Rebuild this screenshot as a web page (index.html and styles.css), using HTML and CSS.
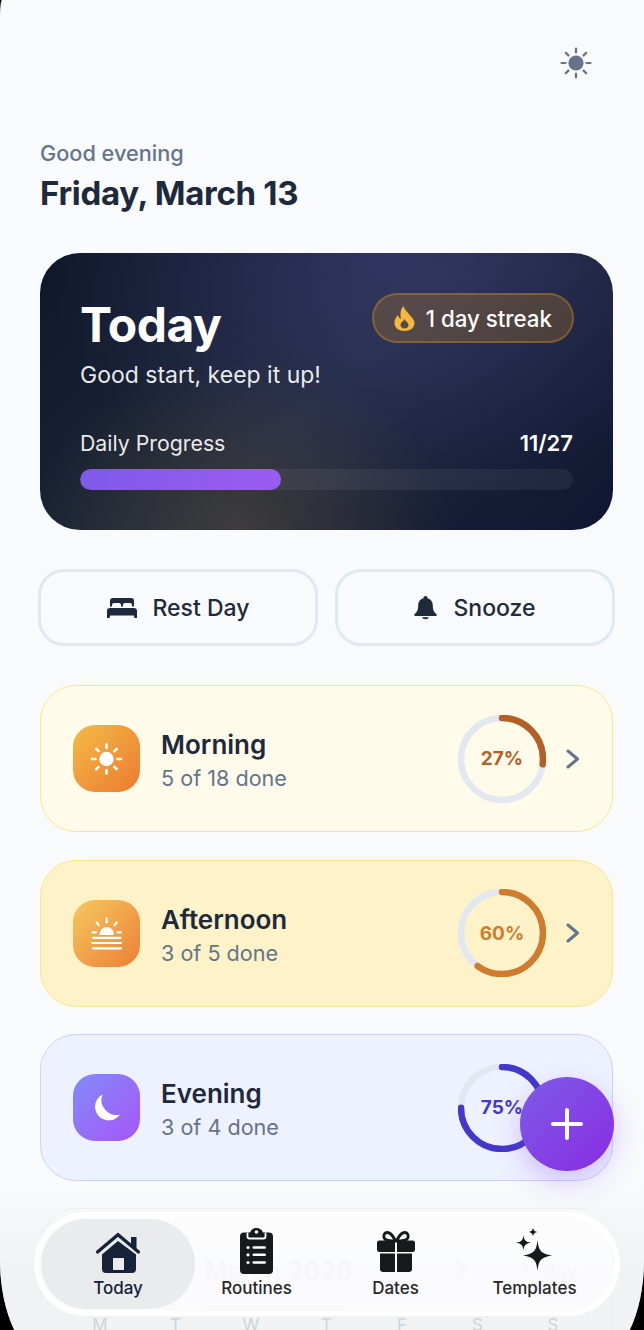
FILE: index.html
```html
<!DOCTYPE html>
<html lang="en">
<head>
    <meta charset="UTF-8">
    <meta name="viewport" content="width=device-width, initial-scale=1.0">
    <title>Today</title>
    <link rel="stylesheet" href="styles.css">
</head>
<body>
<div class="screen">
    <div class="topbar">
        <svg class="theme-icon" viewBox="0 0 32 32" width="32" height="32">
            <circle cx="16" cy="16" r="7.6" fill="#64748b"/>
            <g stroke="#64748b" stroke-width="2.2" stroke-linecap="round">
                <path d="M16 1.5v4M16 26.5v4M1.5 16h4M26.5 16h4M5.8 5.8l2.6 2.6M23.6 23.6l2.6 2.6M5.8 26.2l2.6-2.6M23.6 8.4l2.6-2.6"/>
            </g>
        </svg>
    </div>

    <p class="greeting">Good evening</p>
    <h1 class="date">Friday, March 13</h1>

    <section class="hero">
        <div class="hero-top">
            <div>
                <h2 class="hero-title">Today</h2>
                <p class="hero-sub">Good start, keep it up!</p>
            </div>
            <div class="streak">
                <svg viewBox="0 0 20 25" width="21" height="25">
                    <path fill="#f5b83d" fill-rule="evenodd" d="M9 0C10 4 13 6 16 10C19 13 20 15 20 17C20 22 15.5 25 10 25C4.5 25 0 22 0 17C0 13 2 10.500 3.500 9C4 11 5 12.500 6.500 13C5.500 8 6 3 9 0ZM10 13C11 15.500 14 16.500 14 19C14 21 12.200 22.500 10 22.500C7.800 22.500 6 21 6 19C6 16.500 9 15.500 10 13Z"/>
                </svg>
                <span>1 day streak</span>
            </div>
        </div>
        <div class="progress-head">
            <span>Daily Progress</span>
            <span class="progress-count">11/27</span>
        </div>
        <div class="progress-track">
            <div class="progress-fill" style="width: 40.7%"></div>
        </div>
    </section>

    <div class="actions">
        <button class="action">
            <svg viewBox="0 0 30 20" width="30" height="20">
                <path fill="#1e293b" fill-rule="evenodd" d="M6 0H24A3 3 0 0 1 27 3V8.500H25V7A2 2 0 0 0 23 5H18A2 2 0 0 0 16 7V8.500H14V7A2 2 0 0 0 12 5H7A2 2 0 0 0 5 7V8.500H3V3A3 3 0 0 1 6 0Z"/>
                <path fill="#1e293b" d="M3 10H27A3 3 0 0 1 30 13V20H27.500L26.800 17.500H3.200L2.500 20H0V13A3 3 0 0 1 3 10Z"/>
            </svg>
            <span>Rest Day</span>
        </button>
        <button class="action">
            <svg viewBox="0 0 23 24" width="23" height="24">
                <path fill="#1e293b" d="M11.500 0A2 2 0 0 1 13.500 2.200C17 3 18.800 6 18.800 9.500C18.800 14 20 16 22.300 18C23.200 18.900 22.700 20 21.500 20H1.500C0.300 20 -0.200 18.900 0.700 18C3 16 4.200 14 4.200 9.500C4.200 6 6 3 9.500 2.200A2 2 0 0 1 11.500 0Z"/>
                <path fill="#1e293b" d="M8 21.200H15A3.600 2.800 0 0 1 8 21.200Z"/>
            </svg>
            <span>Snooze</span>
        </button>
    </div>

    <a class="routine morning">
        <div class="routine-icon icon-warm">
            <svg viewBox="0 0 67 67" width="67" height="67">
                <circle cx="33.500" cy="34" r="7.200" fill="#fff"/>
                <path stroke="#fff" stroke-width="2.600" stroke-linecap="round" d="M33.500 19.500v3.500M33.500 45v3.500M19 34h3.500M44.500 34h3.500M23.300 23.800l2.300 2.300M41.400 41.900l2.300 2.300M23.300 44.200l2.300-2.300M41.400 26.100l2.300-2.300"/>
            </svg>
        </div>
        <div class="routine-text">
            <h3>Morning</h3>
            <p>5 of 18 done</p>
        </div>
        <div class="ring">
            <svg viewBox="0 0 88 88" width="88" height="88">
                <circle class="ring-track" cx="44" cy="44" r="41"/>
                <circle class="ring-value" cx="44" cy="44" r="41" stroke="#b45f26" stroke-dasharray="69.600 258"/>
            </svg>
            <span style="color: #b45f26">27%</span>
        </div>
        <svg class="chevron" viewBox="0 0 14 20" width="14" height="20"><path d="M2 2l9.500 8L2 18"/></svg>
    </a>

    <a class="routine afternoon">
        <div class="routine-icon icon-warm">
            <svg viewBox="0 0 67 67" width="67" height="67">
                <path fill="#fff" d="M26.500 35A7.200 8 0 0 1 41 35Z"/>
                <path stroke="#fff" stroke-width="2.200" stroke-linecap="round" d="M33.700 18.500v4M23.600 22.500l2.200 2.600M43.800 22.500l-2.200 2.600M19.500 32.300h3.500M44.300 32.300h3.500M20 37.800h27.500M19 43h29M20 48.300h28"/>
            </svg>
        </div>
        <div class="routine-text">
            <h3>Afternoon</h3>
            <p>3 of 5 done</p>
        </div>
        <div class="ring">
            <svg viewBox="0 0 88 88" width="88" height="88">
                <circle class="ring-track" cx="44" cy="44" r="41"/>
                <circle class="ring-value" cx="44" cy="44" r="41" stroke="#cf7d2c" stroke-dasharray="154.600 258"/>
            </svg>
            <span style="color: #cf7d2c">60%</span>
        </div>
        <svg class="chevron" viewBox="0 0 14 20" width="14" height="20"><path d="M2 2l9.500 8L2 18"/></svg>
    </a>

    <a class="routine evening">
        <div class="routine-icon icon-cool">
            <svg viewBox="0 0 67 67" width="67" height="67">
                <path fill="#fff" d="M29.500 20.500A13.700 13.700 0 1 0 47 40.500A15 15 0 0 1 29.500 20.500Z"/>
            </svg>
        </div>
        <div class="routine-text">
            <h3>Evening</h3>
            <p>3 of 4 done</p>
        </div>
        <div class="ring">
            <svg viewBox="0 0 88 88" width="88" height="88">
                <circle class="ring-track" cx="44" cy="44" r="41"/>
                <circle class="ring-value" cx="44" cy="44" r="41" stroke="#4338ca" stroke-dasharray="193.200 258"/>
            </svg>
            <span style="color: #4338ca">75%</span>
        </div>
        <svg class="chevron" viewBox="0 0 14 20" width="14" height="20"><path d="M2 2l9.500 8L2 18"/></svg>
    </a>

    <section class="calendar">
        <div class="calendar-head">
            <span class="calendar-month">March 2026</span>
            <svg class="calendar-next" viewBox="0 0 14 24" width="14" height="24"><path d="M2 2l9 10-9 10"/></svg>
            <span class="calendar-today">Today</span>
        </div>
        <div class="calendar-sub"></div>
        <div class="weekdays">
            <span>M</span><span>T</span><span>W</span><span>T</span><span>F</span><span>S</span><span>S</span>
        </div>
    </section>

    <div class="bottom-fade"></div>

    <button class="fab">
        <svg viewBox="0 0 32 32" width="32" height="32"><path d="M16 2v28M2 16h28"/></svg>
    </button>

    <nav class="tabbar">
        <a class="tab tab-active">
            <svg viewBox="0 0 46 42" width="46" height="42">
                <path fill="#16213a" d="M36 5h5.500v12H36z"/>
                <path fill="#e9ebec" d="M23 2L0 21l2 3L23 7l21 17 2-3z"/>
                <path fill="none" stroke="#16213a" stroke-width="3.200" stroke-linecap="round" stroke-linejoin="miter" d="M2.500 20L23 2.700 43.500 20"/>
                <path fill="#16213a" fill-rule="evenodd" d="M23 9L7 22.500V37a4 4 0 0 0 4 4H37a4 4 0 0 0 4-4V22.500ZM18 26h11v12H18Z"/>
            </svg>
            <span>Today</span>
        </a>
        <a class="tab">
            <svg viewBox="0 0 33 46" width="33" height="46">
                <path fill="#18191b" d="M4 4.600H10C11 1.500 13.500 0 16.500 0C19.500 0 22 1.500 23 4.600H29A4 4 0 0 1 33 8.600V42A4 4 0 0 1 29 46H4A4 4 0 0 1 0 42V8.600A4 4 0 0 1 4 4.600Z"/>
                <circle cx="16.500" cy="4" r="1.800" fill="#fcfcfd"/>
                <path fill="none" stroke="#fcfcfd" stroke-width="1.800" stroke-linecap="round" d="M7.500 5.500V8.500A2 2 0 0 0 9.500 10.500H23.500A2 2 0 0 0 25.500 8.500V5.500"/>
                <g fill="#fcfcfd">
                    <circle cx="8" cy="19.500" r="1.600"/><circle cx="8" cy="26.800" r="1.600"/><circle cx="8" cy="34.500" r="1.600"/>
                    <rect x="12.500" y="18.300" width="13.500" height="2.400" rx="1.200"/>
                    <rect x="12.500" y="25.600" width="13.500" height="2.400" rx="1.200"/>
                    <rect x="12.500" y="33.300" width="13.500" height="2.400" rx="1.200"/>
                </g>
            </svg>
            <span>Routines</span>
        </a>
        <a class="tab">
            <svg viewBox="0 0 38 43" width="38" height="43">
                <path fill="none" stroke="#18191b" stroke-width="2.800" d="M18.500 10C16 5 14 1.500 10.500 1.500C7 1.500 6 5 7.500 7.500C9 10 14 10 18.500 10ZM19.500 10C22 5 24 1.500 27.500 1.500C31 1.500 32 5 30.500 7.500C29 10 24 10 19.500 10Z"/>
                <path fill="#18191b" d="M2.500 9.500H18V21H2.500A2.500 2.500 0 0 1 0 18.500V12A2.500 2.500 0 0 1 2.500 9.500ZM20 9.500H35.500A2.500 2.500 0 0 1 38 12V18.500A2.500 2.500 0 0 1 35.500 21H20ZM3 22.500H18V41H6A3 3 0 0 1 3 38ZM20 22.500H35V38A3 3 0 0 1 32 41H20Z"/>
            </svg>
            <span>Dates</span>
        </a>
        <a class="tab">
            <svg viewBox="0 0 38 46" width="38" height="46">
                <g fill="#18191b" transform="translate(-1.500 -1)">
                    <path d="M23 13C24 23 26 27 37.500 28.500C26 30 24 34 23 44C22 34 20 30 8.500 28.500C20 27 22 23 23 13Z"/>
                    <path d="M9 8C9.500 13 11 15 16.500 15.700C11 16.400 9.500 18.500 9 23.500C8.500 18.500 7 16.400 1.500 15.700C7 15 8.500 13 9 8Z"/>
                    <path d="M18.500 0.500C18.800 3.300 19.800 4.500 23 5C19.800 5.500 18.800 6.700 18.500 9.500C18.200 6.700 17.200 5.500 14 5C17.200 4.500 18.200 3.300 18.500 0.500Z"/>
                </g>
            </svg>
            <span>Templates</span>
        </a>
    </nav>
</div>
</body>
</html>
```

FILE: styles.css
```css
* {
    box-sizing: border-box;
}
body {
    margin: 0;
    background: #000;
    height: 1330px;
    overflow: hidden;
    font-family: Inter, "Noto Sans", sans-serif;
}
.screen {
    position: relative;
    width: 644px;
    height: 1360px;
    padding: 47px 31px 0 40px;
    background: #f8fafc;
    border-radius: 2px 0 50px 50px / 16px 0 100px 100px;
    overflow: hidden;
}

.topbar {
    display: flex;
    justify-content: flex-end;
    height: 32px;
    padding-right: 21px;
}

.greeting {
    margin: 59px 0 0;
    font-size: 21.7px;
    line-height: 30px;
    font-weight: 500;
    color: #64748b;
}
.date {
    margin: 5px 0 0;
    font-size: 33px;
    line-height: 40px;
    font-weight: 700;
    letter-spacing: -0.3px;
    color: #1e293b;
}

.hero {
    height: 277px;
    margin-top: 40px;
    padding: 40px;
    border-radius: 40px;
    color: #fff;
    background:
        radial-gradient(ellipse 340px 250px at 61% 3%, rgba(99, 88, 190, 0.3), rgba(99, 88, 190, 0) 100%),
        radial-gradient(ellipse 210px 170px at 35% 100%, rgba(250, 175, 70, 0.15), rgba(250, 175, 70, 0) 100%),
        linear-gradient(135deg, #0f172a, #1e293b 50%, #101632);
}
.hero-top {
    display: flex;
    justify-content: space-between;
    align-items: flex-start;
}
.hero-title {
    margin: 3px 0 0;
    font-size: 48px;
    line-height: 58px;
    font-weight: 700;
    letter-spacing: -0.5px;
}
.hero-sub {
    margin: 6px 0 0;
    font-size: 23px;
    line-height: 30px;
    color: rgba(255, 255, 255, 0.92);
}
.streak {
    display: flex;
    align-items: center;
    gap: 11px;
    height: 50px;
    margin-right: -1px;
    padding: 0 20px;
    border: 2px solid rgba(245, 158, 11, 0.3);
    border-radius: 25px;
    background: rgba(245, 158, 11, 0.2);
    font-size: 22.3px;
    font-weight: 500;
}

.progress-head {
    display: flex;
    justify-content: space-between;
    margin-top: 38px;
    font-size: 21.3px;
    line-height: 30px;
    color: rgba(255, 255, 255, 0.92);
}
.progress-count {
    font-size: 22px;
    font-weight: 600;
    color: #fff;
}
.progress-track {
    height: 21px;
    margin-top: 11px;
    border-radius: 11px;
    background: rgba(255, 255, 255, 0.06);
    overflow: hidden;
}
.progress-fill {
    height: 100%;
    border-radius: 11px;
    background: linear-gradient(90deg, #7f5ae8, #9b5cf0);
}

.actions {
    display: grid;
    grid-template-columns: 1fr 1fr;
    gap: 17px;
    margin: 39px -2px 0;
}
.action {
    display: flex;
    align-items: center;
    justify-content: center;
    gap: 16px;
    height: 77px;
    border: 3px solid #e2e8f0;
    border-radius: 26px;
    background: #f8fafc;
    font-family: inherit;
    font-size: 23px;
    font-weight: 500;
    color: #1e293b;
}

.routine {
    display: flex;
    align-items: center;
    height: 147px;
    margin-top: 27.5px;
    padding: 0 32px;
    border: 1px solid;
    border-radius: 36px;
}
.actions + .routine {
    margin-top: 39px;
}
.morning {
    background: #fffbeb;
    border-color: #fde68a;
}
.afternoon {
    background: #fdf2c8;
    border-color: #fde68a;
}
.evening {
    background: #eef2ff;
    border-color: #c7d2fe;
}
.routine-icon {
    width: 67px;
    height: 67px;
    border-radius: 22px;
}
.icon-warm {
    background: linear-gradient(135deg, #f4bb47, #ec7a30);
}
.afternoon .icon-warm {
    background: linear-gradient(135deg, #f5c860, #ec7f35);
}
.icon-cool {
    background: linear-gradient(135deg, #818cf8, #a855f7);
}
.routine-text {
    flex: 1;
    margin-left: 21px;
    padding-top: 3px;
}
.routine-text h3 {
    margin: 0;
    font-size: 26px;
    line-height: 33px;
    font-weight: 600;
    color: #1e293b;
}
.routine-text p {
    margin: 3px 0 0;
    font-size: 21.6px;
    line-height: 28px;
    color: #64748b;
}
.ring {
    display: grid;
    place-items: center;
    width: 88px;
    height: 88px;
    font-size: 19px;
    font-weight: 700;
}
.ring > * {
    grid-area: 1 / 1;
}
.ring svg {
    transform: rotate(-90deg);
}
.ring circle {
    fill: none;
    stroke-width: 6.500;
}
.ring-track {
    stroke: #e2e8f0;
}
.ring-value {
    stroke-linecap: round;
}
.chevron {
    margin-left: 20px;
    fill: none;
    stroke: #64748b;
    stroke-width: 3;
    stroke-linecap: round;
    stroke-linejoin: round;
}

.calendar {
    height: 200px;
    margin-top: 27px;
    border: 1px solid #eceef1;
    border-radius: 36px;
    color: #1e293b;
}
.calendar-head {
    display: flex;
    align-items: center;
    height: 40px;
    margin-top: 42px;
    padding-left: 163px;
}
.calendar-month {
    width: 251px;
    font-size: 25px;
    font-weight: 700;
}
.calendar-next {
    fill: none;
    stroke: #1e293b;
    stroke-width: 3;
}
.calendar-today {
    margin-left: 50px;
    font-size: 20px;
    font-weight: 600;
}
.calendar-sub {
    width: 143px;
    height: 4px;
    margin: 15px 0 5px 163px;
    background: #b8c2d0;
}
.weekdays {
    display: grid;
    grid-template-columns: repeat(7, 75.500px);
    justify-content: center;
    font-size: 17px;
    line-height: 20px;
    text-align: center;
    color: #7c8aa0;
}

.bottom-fade {
    position: absolute;
    left: 0;
    right: 0;
    top: 1180px;
    height: 180px;
    background: linear-gradient(rgba(240, 241, 242, 0), rgba(238, 239, 240, 0.72) 50%);
}

.fab {
    position: absolute;
    left: 520px;
    top: 1077px;
    display: flex;
    align-items: center;
    justify-content: center;
    width: 94px;
    height: 94px;
    padding: 0;
    border: none;
    border-radius: 50%;
    background: linear-gradient(135deg, #7c5ce8, #8a2be2);
    box-shadow: 0 10px 28px rgba(124, 58, 237, 0.28);
}
.fab path {
    fill: none;
    stroke: #fff;
    stroke-width: 4;
    stroke-linecap: round;
}

.tabbar {
    position: absolute;
    left: 34px;
    top: 1212px;
    display: flex;
    width: 586px;
    height: 104px;
    padding: 2px;
    border: 5px solid rgba(255, 255, 255, 0.92);
    border-radius: 52px;
    background: rgba(252, 252, 253, 0.93);
}
.tab {
    display: flex;
    flex-direction: column;
    align-items: center;
    justify-content: flex-end;
    width: 139px;
    height: 90px;
    padding-bottom: 10px;
    font-size: 17px;
    line-height: 22px;
    font-weight: 500;
    color: #27282b;
}
.tab svg {
    margin-bottom: 3px;
}
.tab-active {
    width: 154px;
    margin-right: -8px;
    border-radius: 45px;
    background: #e9ebec;
    color: #16213a;
}
```
